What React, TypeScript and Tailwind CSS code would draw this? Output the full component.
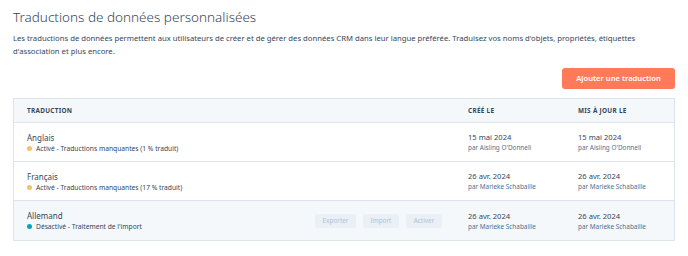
import React from "react";

const rows = [
  {
    name: "Anglais",
    dot: "bg-[#f5c26b]",
    status: "Activé - Traductions manquantes (1 % traduit)",
    created: "15 mai 2024",
    createdBy: "par Aisling O'Donnell",
    updated: "15 mai 2024",
    updatedBy: "par Aisling O'Donnell",
    actions: false,
  },
  {
    name: "Français",
    dot: "bg-[#f5c26b]",
    status: "Activé - Traductions manquantes (17 % traduit)",
    created: "26 avr. 2024",
    createdBy: "par Marieke Schabaille",
    updated: "26 avr. 2024",
    updatedBy: "par Marieke Schabaille",
    actions: false,
  },
  {
    name: "Allemand",
    dot: "bg-[#00a4bd]",
    status: "Désactivé - Traitement de l'import",
    created: "26 avr. 2024",
    createdBy: "par Marieke Schabaille",
    updated: "26 avr. 2024",
    updatedBy: "par Marieke Schabaille",
    actions: true,
  },
];

export default function App() {
  return (
    <div className="w-[688px] h-[256px] bg-white px-[13px] pt-[7px] text-[#33475b] font-['Noto_Sans',sans-serif]">
      <h1 className="text-[13.5px] leading-[20px] font-light">Traductions de données personnalisées</h1>
      <p className="mt-[5px] text-[7.7px] leading-[13px] text-[#33475b]">
        Les traductions de données permettent aux utilisateurs de créer et de gérer des données CRM dans leur langue préférée. Traduisez vos noms d'objets, propriétés, étiquettes
        <br />
        d'association et plus encore.
      </p>

      <div className="flex justify-end mt-[10px]">
        <button className="h-[21px] w-[113px] rounded-[3px] bg-[#ff7a59] text-white text-[7.6px] font-semibold">
          Ajouter une traduction
        </button>
      </div>

      {/* Table */}
      <div className="mt-[9px] border border-[#dfe3eb]">
        <div className="grid grid-cols-[440px_110px_1fr] h-[24px] items-center bg-[#f5f8fa] border-b border-[#dfe3eb] text-[6.4px] font-bold tracking-[0.3px] uppercase">
          <div className="pl-[13px]">Traduction</div>
          <div className="pl-[14px]">Créé le</div>
          <div className="pl-[14px]">Mis à jour le</div>
        </div>
        {rows.map((r, i) => (
          <div
            key={r.name}
            className={
              "grid grid-cols-[440px_110px_1fr] h-[39px] items-center " +
              (i < rows.length - 1 ? "border-b border-[#dfe3eb] " : "") +
              (r.actions ? "bg-[#f5f8fa]" : "bg-white")
            }
          >
            <div className="pl-[13px] pr-[12px] flex items-center justify-between">
              <div>
                <div className="text-[8px] leading-[11px]">{r.name}</div>
                <div className="flex items-center gap-[4px] text-[6.7px] leading-[9px] mt-[1px]">
                  <span className={"w-[5px] h-[5px] rounded-full " + r.dot} />
                  {r.status}
                </div>
              </div>
              {r.actions && (
                <div className="flex gap-[7px]">
                  {["Exporter", "Import", "Activer"].map((a) => (
                    <span
                      key={a}
                      className={
                        "h-[14px] flex items-center justify-center rounded-[2px] bg-[#eaf0f6] text-[#b0c1d4] text-[6.4px] " +
                        (a === "Exporter" ? "w-[41px]" : "w-[36px]")
                      }
                    >
                      {a}
                    </span>
                  ))}
                </div>
              )}
            </div>
            <div className="pl-[14px]">
              <div className="text-[7.6px] leading-[11px]">{r.created}</div>
              <div className="text-[6.4px] leading-[9px] text-[#516f90]">{r.createdBy}</div>
            </div>
            <div className="pl-[14px]">
              <div className="text-[7.6px] leading-[11px]">{r.updated}</div>
              <div className="text-[6.4px] leading-[9px] text-[#516f90]">{r.updatedBy}</div>
            </div>
          </div>
        ))}
      </div>
    </div>
  );
}
